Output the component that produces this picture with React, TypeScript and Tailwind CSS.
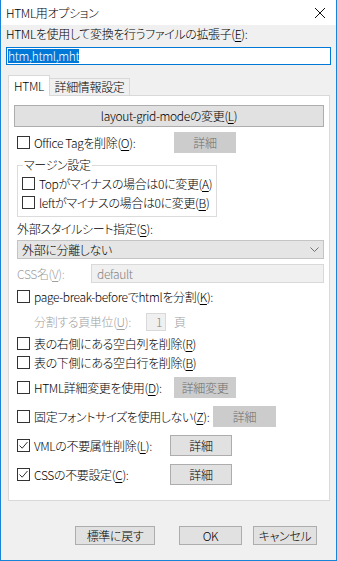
import type { ReactNode } from "react";

const Check = ({ checked = false }: { checked?: boolean }) => (
  <span className="flex h-[13px] w-[13px] shrink-0 items-center justify-center border border-[#333] bg-white">
    {checked && (
      <svg width="11" height="11" viewBox="0 0 11 11">
        <path d="M1.5 5.5 L4.2 8.2 L9.5 2" fill="none" stroke="#333" strokeWidth="1" />
      </svg>
    )}
  </span>
);

const Row = ({ checked, children, className = "" }: { checked?: boolean; children: ReactNode; className?: string }) => (
  <div className={`flex items-center gap-[4px] ${className}`}>
    <Check checked={checked} />
    <span className="whitespace-nowrap">{children}</span>
  </div>
);

const Btn = ({ children, disabled, className = "" }: { children: ReactNode; disabled?: boolean; className?: string }) => (
  <div
    className={`flex items-center justify-center border ${
      disabled ? "border-[#cccccc] bg-[#cccccc] text-[#6d6d6d]" : "border-[#adadad] bg-[#e1e1e1] text-black"
    } ${className}`}
  >
    {children}
  </div>
);

const U = ({ children }: { children: ReactNode }) => <u className="underline-offset-2">{children}</u>;

export default function App() {
  return (
    <div className="flex h-[561px] w-[337px] flex-col border-x border-b border-[#1883d7] bg-[#f0f0f0] text-[12px] font-light leading-[16px] tracking-[-0.35px] text-black [font-family:'Noto_Sans_CJK_JP',sans-serif] [font-feature-settings:'palt']">
      {/* title bar */}
      <div className="flex h-[25px] items-center justify-between bg-white pl-[5px] pr-[10px]">
        <span>HTML用オプション</span>
        <svg width="12" height="12" viewBox="0 0 12 12">
          <path d="M1 1 L11 11 M11 1 L1 11" stroke="#111" strokeWidth="1" />
        </svg>
      </div>

      <div className="flex flex-1 flex-col px-[5px]">
        <div className="h-[18px] leading-[18px]">
          HTMLを使用して変換を行うファイルの拡張子(<U>E</U>):
        </div>
        <div className="mt-[4px] flex h-[18px] items-center border border-[#0078d7] bg-white pl-[1px]">
          <span className="bg-[#0078d7] leading-[14px] text-white">htm,html,mht</span>
        </div>

        {/* tabs */}
        <div className="ml-[2px] mt-[10px] flex items-end">
          <div className="relative z-10 -mb-px flex h-[21px] w-[42px] items-center justify-center border border-b-0 border-[#d9d9d9] bg-white">
            HTML
          </div>
          <div className="flex h-[17px] w-[80px] items-center justify-center border border-b-0 border-l-0 border-[#d9d9d9] bg-[#f0f0f0]">
            詳細情報設定
          </div>
        </div>

        <div className="ml-[2px] mr-[1px] flex h-[406px] flex-col border border-[#d9d9d9] bg-white px-[5px]">
          <Btn className="mt-[9px] h-[22px]">
            layout-grid-modeの変更(<U>L</U>)
          </Btn>

          <div className="ml-[3px] mt-[5px] flex h-[21px] items-center">
            <Row className="w-[157px]">
              Office Tagを削除(<U>O</U>):
            </Row>
            <Btn disabled className="h-[21px] w-[62px]">
              詳細
            </Btn>
          </div>

          <div className="relative ml-[3px] mt-[12px] h-[52px] w-[200px] border border-[#dcdcdc] pl-[4px] pt-[8px]">
            <span className="absolute -top-[9px] left-[5px] bg-white px-[1px]">マージン設定</span>
            <Row className="h-[19px]">
              Topがマイナスの場合は0に変更(<U>A</U>)
            </Row>
            <Row className="h-[19px]">
              leftがマイナスの場合は0に変更(<U>B</U>)
            </Row>
          </div>

          <div className="ml-[3px] mt-[4px] h-[16px]">
            外部スタイルシート指定(<U>S</U>):
          </div>
          <div className="ml-[3px] mt-[3px] flex h-[19px] items-center justify-between border border-[#c4c4c4] bg-[#e5e5e5] pl-[4px] pr-[4px]">
            <span>外部に分離しない</span>
            <svg width="9" height="6" viewBox="0 0 9 6">
              <path d="M0.5 0.5 L4.5 4.5 L8.5 0.5" fill="none" stroke="#707070" strokeWidth="1" />
            </svg>
          </div>

          <div className="ml-[3px] mt-[5px] flex h-[19px] items-center text-[#a0a0a0]">
            <span className="w-[74px]">
              CSS名(<U>V</U>):
            </span>
            <div className="flex h-[19px] flex-1 items-center border border-[#d9d9d9] bg-[#f0f0f0] pl-[5px] text-[#838383]">
              default
            </div>
          </div>

          <Row className="ml-[3px] mt-[4px] h-[19px]">
            page-break-beforeでhtmlを分割(<U>K</U>):
          </Row>

          <div className="ml-[20px] mt-[7px] flex h-[18px] items-center text-[#a0a0a0]">
            <span className="w-[112px]">
              分割する頁単位(<U>U</U>):
            </span>
            <div className="flex h-[18px] w-[20px] items-center justify-end border border-[#d9d9d9] bg-[#f0f0f0] pr-[3px] text-[#838383]">
              1
            </div>
            <span className="ml-[8px]">頁</span>
          </div>

          <Row className="ml-[3px] mt-[3px] h-[19px]">
            表の右側にある空白列を削除(<U>R</U>)
          </Row>
          <Row className="ml-[3px] h-[19px]">
            表の下側にある空白行を削除(<U>B</U>)
          </Row>

          <div className="ml-[3px] mt-[5px] flex h-[21px] items-center">
            <Row className="w-[157px]">
              HTML詳細変更を使用(<U>D</U>):
            </Row>
            <Btn disabled className="h-[21px] w-[62px]">
              詳細変更
            </Btn>
          </div>

          <div className="ml-[3px] mt-[8px] flex h-[21px] items-center">
            <Row className="w-[196px]">
              固定フォントサイズを使用しない(<U>Z</U>):
            </Row>
            <Btn disabled className="h-[21px] w-[63px]">
              詳細
            </Btn>
          </div>

          <div className="ml-[3px] mt-[8px] flex h-[21px] items-center">
            <Row checked className="w-[153px]">
              VMLの不要属性削除(<U>L</U>):
            </Row>
            <Btn className="h-[21px] w-[62px]">詳細</Btn>
          </div>

          <div className="ml-[3px] mt-[8px] flex h-[21px] items-center">
            <Row checked className="w-[153px]">
              CSSの不要設定(<U>C</U>):
            </Row>
            <Btn className="h-[21px] w-[62px]">詳細</Btn>
          </div>
        </div>

        <div className="mt-[25px] flex">
          <Btn className="ml-[69px] h-[19px] w-[80px]">標準に戻す</Btn>
          <Btn className="ml-[24px] h-[19px] w-[63px]">OK</Btn>
          <Btn className="ml-[11px] h-[19px] w-[64px]">キャンセル</Btn>
        </div>
      </div>
    </div>
  );
}
